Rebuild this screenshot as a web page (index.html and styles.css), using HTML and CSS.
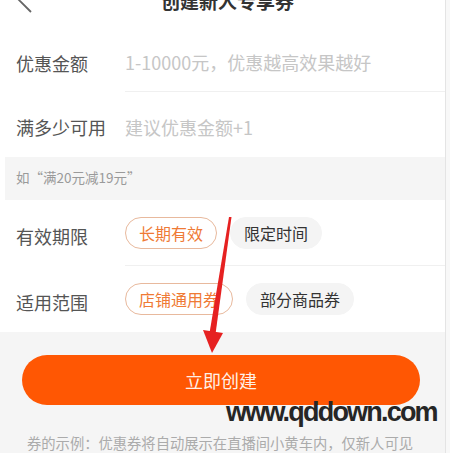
FILE: index.html
```html
<!DOCTYPE html>
<html lang="zh-CN">
<head>
    <meta charset="UTF-8">
    <meta name="viewport" content="width=device-width, initial-scale=1.0">
    <link rel="stylesheet" href="styles.css">
    <title>创建新人专享券</title>
</head>
<body>
    <div class="screen">
        <div class="phone">
            <!-- cabecera -->
            <div class="header">
                <svg class="back" width="30" height="20" viewBox="0 0 30 20">
                    <polyline points="26,-11 14,0 26,12" fill="none" stroke="#666" stroke-width="1.8"/>
                </svg>
                <div class="title">创建新人专享券</div>
            </div>

            <div class="row">
                <div class="label">优惠金额</div>
                <div class="value"><span class="placeholder">1-10000元，优惠越高效果越好</span></div>
            </div>
            <div class="row">
                <div class="label">满多少可用</div>
                <div class="value no-line"><span class="placeholder">建议优惠金额+1</span></div>
            </div>
            <div class="hint">如“满20元减19元”</div>

            <div class="row tall">
                <div class="label">有效期限</div>
                <div class="value chips">
                    <span class="chip active">长期有效</span>
                    <span class="chip">限定时间</span>
                </div>
            </div>
            <div class="row tall">
                <div class="label">适用范围</div>
                <div class="value chips no-line">
                    <span class="chip active">店铺通用券</span>
                    <span class="chip">部分商品券</span>
                </div>
            </div>

            <div class="bottom">
                <button class="create">立即创建</button>
                <p class="example">券的示例：优惠券将自动展示在直播间小黄车内，仅新人可见</p>
            </div>
        </div>
        <div class="edge"></div>
    </div>

    <!-- flecha roja y marca de agua encima -->
    <svg class="arrow" width="450" height="453" viewBox="0 0 450 453">
        <polygon points="229,217 231.5,217 215.5,334 209.5,333" fill="#e62121"/>
        <polygon points="203,330 223,333 212,353" fill="#e62121"/>
    </svg>
    <div class="watermark">www.qddown.com</div>
</body>
</html>
```

FILE: styles.css
```css
* {
    box-sizing: border-box;
}

body {
    margin: 0;
    background-color: #ffffff;
    font-family: "Noto Sans CJK SC", "Noto Sans", sans-serif;
    color: #555555;
    overflow: hidden;
}

.screen {
    display: flex;
    height: 453px;
    position: relative;
}

.phone {
    width: 440px;
    margin-left: 5px;
    display: flex;
    flex-direction: column;
}

.edge {
    width: 5px;
    border-left: 1px solid #e4e4e4;
    background-color: #f8f8f8;
}

.header {
    height: 28px;
    position: relative;
}

.back {
    position: absolute;
    left: 0;
    top: 0;
}

.title {
    margin-top: -9px;
    text-align: center;
    font-size: 19px;
    line-height: 20px;
    font-weight: bold;
    color: #333333;
    padding-left: 5px;
}

.row {
    display: flex;
    height: 64px;
    padding-left: 11px;
}

.row + .row {
    height: 65px;
}

.row.tall,
.row.tall + .row.tall {
    height: 66px;
}

.label {
    width: 109px;
    display: flex;
    align-items: center;
    padding-top: 5px;
    font-size: 18px;
    color: #555555;
}

.value {
    flex: 1;
    display: flex;
    align-items: center;
    padding-top: 4px;
    border-bottom: 1px solid #f0f0f0;
}

.value.no-line {
    border-bottom: none;
}

.placeholder {
    font-size: 18px;
    color: #c6c6c6;
}

.hint {
    height: 43px;
    background-color: #f5f5f5;
    padding-left: 11px;
    padding-top: 10px;
    font-size: 13.5px;
    color: #9a9a9a;
}

.chips {
    gap: 13px;
    padding-top: 0;
}

.chip {
    display: inline-block;
    height: 32px;
    line-height: 30px;
    padding: 0 13px;
    border-radius: 16px;
    font-size: 16px;
    color: #333333;
    background-color: #f4f4f4;
    border: 1px solid #f4f4f4;
}

.chip.active {
    color: #ef7a35;
    background-color: #ffffff;
    border-color: #e8b99d;
}

.bottom {
    flex: 1;
    background-color: #f5f5f5;
    padding-top: 23px;
    margin-left: -5px;
    padding-left: 22px;
}

.create {
    display: block;
    width: 398px;
    height: 50px;
    border: none;
    border-radius: 25px;
    background-color: #ff5703;
    color: #fff0e6;
    font-family: "Noto Sans CJK SC", sans-serif;
    font-size: 18px;
}

.example {
    margin: 28px 0 0 5px;
    font-size: 14.3px;
    line-height: 20px;
    color: #ababab;
    white-space: nowrap;
}

.arrow {
    position: absolute;
    left: 0;
    top: 0;
    pointer-events: none;
}

.watermark {
    position: absolute;
    left: 226px;
    top: 399px;
    font-family: "Liberation Sans", Arial, sans-serif;
    font-weight: bold;
    font-size: 27px;
    line-height: 27px;
    letter-spacing: -1.8px;
    color: #262626;
}
```
